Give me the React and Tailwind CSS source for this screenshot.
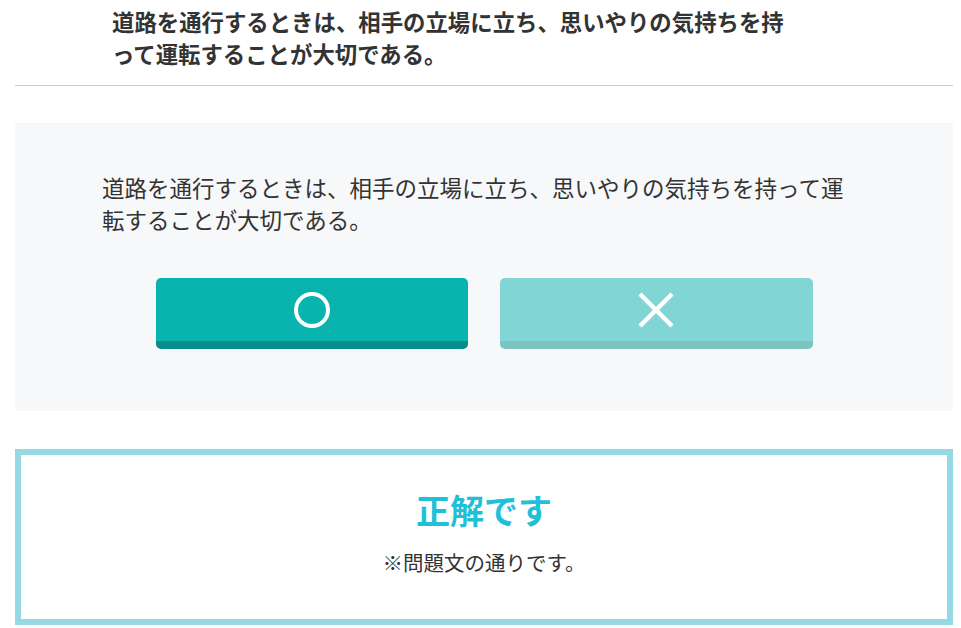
import React from "react";

const font = { fontFamily: '"Noto Sans CJK JP", "Noto Sans", sans-serif' };

export default function App() {
  return (
    <div className="bg-white w-full h-[628px] overflow-hidden pl-[15px] pr-[8px] text-[#333]" style={font}>
      <div className="pl-[97px] pt-[5px] pb-[16px]">
        <p className="text-[22.4px] leading-[32px] font-bold max-w-[690px]">
          道路を通行するときは、相手の立場に立ち、思いやりの気持ちを持って運転することが大切である。
        </p>
      </div>
      <div className="h-px bg-[#cccccc]" />
      <div className="mt-[37px] bg-[#f7f8fa] pt-[48px] pb-[62px] pl-[87px] pr-[80px]">
        <p className="text-[22.5px] leading-[32px] text-[#333] max-w-[760px]">
          道路を通行するときは、相手の立場に立ち、思いやりの気持ちを持って運転することが大切である。
        </p>
        <div className="mt-[43px] -ml-[87px] -mr-[80px] flex justify-center gap-[32px]">
          <button className="w-[312px] h-[71px] rounded-[5px] bg-[#09b3ae] border-b-[8px] border-[#068e8a] flex items-center justify-center">
            <svg width="38" height="38" viewBox="0 0 38 38">
              <circle cx="19" cy="19" r="16" fill="none" stroke="white" strokeWidth="4" />
            </svg>
          </button>
          <button className="w-[313px] h-[71px] rounded-[5px] bg-[#81d5d4] border-b-[8px] border-[#7cc3c2] flex items-center justify-center">
            <svg width="38" height="38" viewBox="0 0 38 38">
              <path d="M3 3 L35 35 M35 3 L3 35" stroke="white" strokeWidth="4.5" fill="none" />
            </svg>
          </button>
        </div>
      </div>
      <div className="mt-[38px] h-[176px] border-[6px] border-[#94d9e3] flex flex-col items-center">
        <p className="mt-[33px] text-[34px] leading-[44px] font-bold text-[#22bfd8]">正解です</p>
        <p className="mt-[16px] text-[20.5px] leading-[28px] text-[#333]">※問題文の通りです。</p>
      </div>
    </div>
  );
}
